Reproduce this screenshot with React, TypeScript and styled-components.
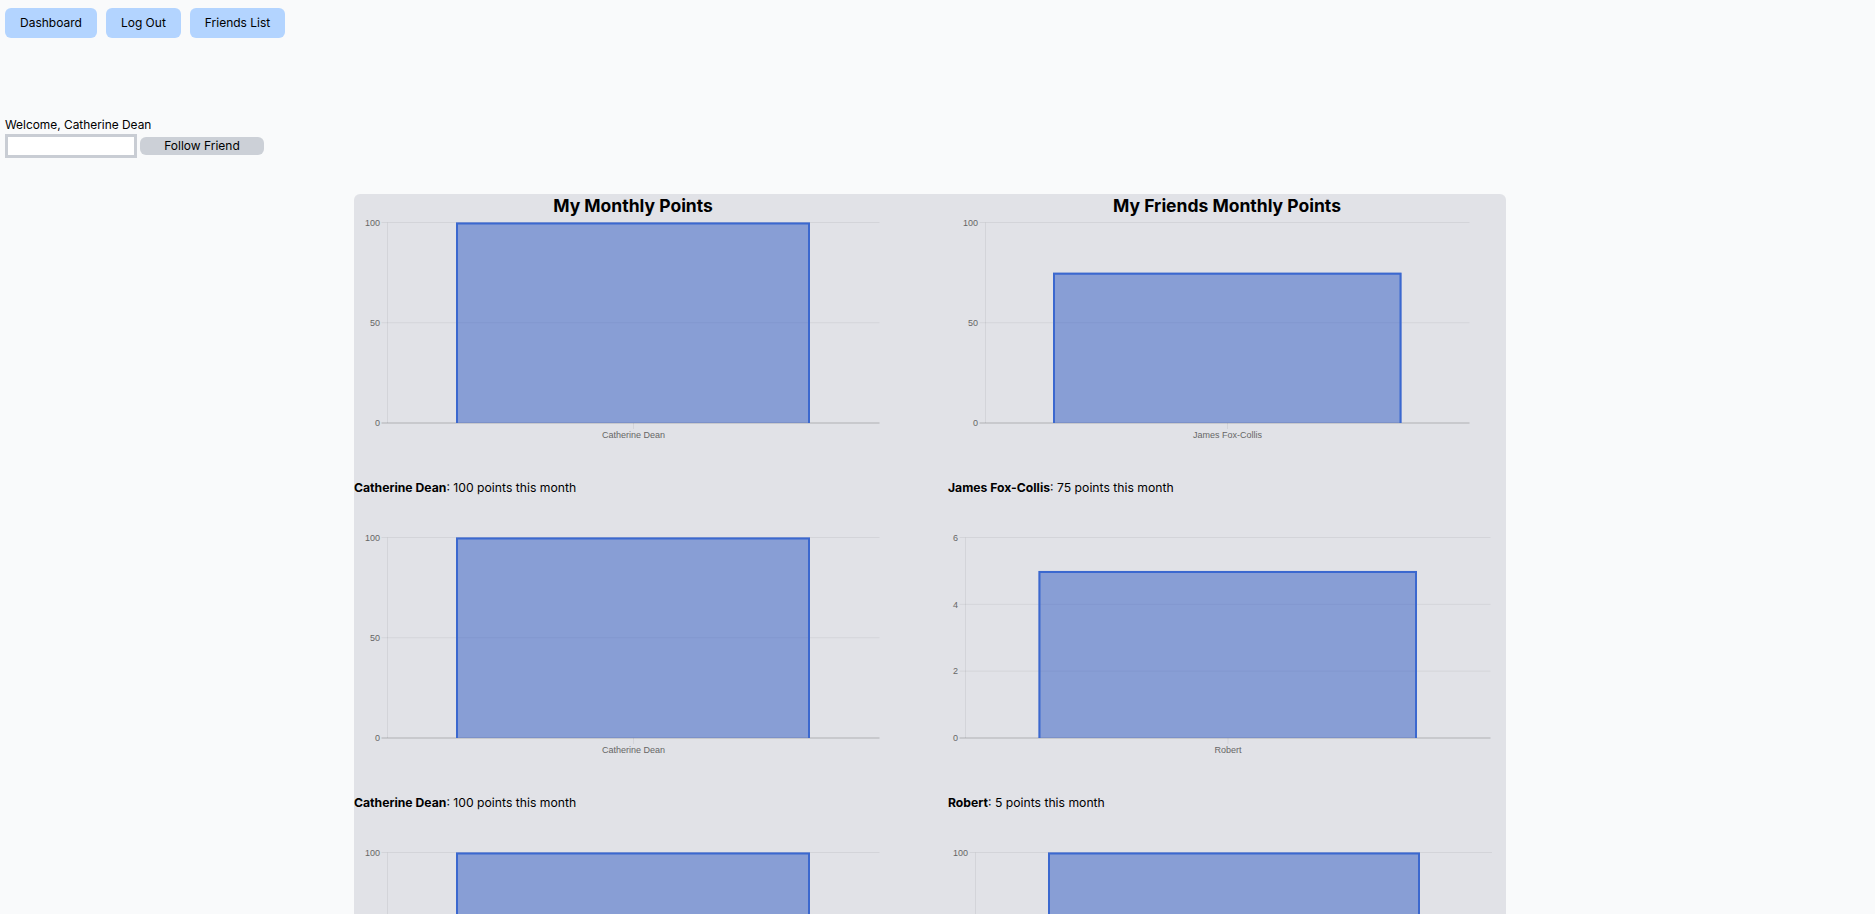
import styled, { createGlobalStyle } from "styled-components";

const GlobalStyle = createGlobalStyle`
  html, body {
    margin: 0;
    padding: 0;
    height: 100%;
    overflow: hidden;
    background: #f9fafb;
  }
  body {
    font-family: Inter, "Liberation Sans", sans-serif;
    color: #000;
  }
`;

const Page = styled.div`
  height: 914px;
  overflow: hidden;
  padding: 8px 15px 0 0;
  box-sizing: border-box;
  font-size: 12px;
  line-height: 18px;
`;

const Header = styled.header`
  padding-left: 5px;
`;

const Nav = styled.nav`
  display: flex;
  gap: 9px;
  height: 30px;
`;

const NavButton = styled.button`
  height: 30px;
  padding: 0 15px;
  border: none;
  border-radius: 6px;
  background: #b3d4ff;
  color: #000;
  font: inherit;
  cursor: pointer;
`;

const Welcome = styled.div`
  margin-top: 78px;
  font-size: 11.9px;
`;

const FollowForm = styled.form`
  display: flex;
  align-items: center;
  gap: 3px;
  height: 24px;
`;

const FollowInput = styled.input`
  width: 132px;
  height: 24px;
  padding: 0;
  box-sizing: border-box;
  border: 3px solid #c9cdd4;
  background: #fff;
`;

const FollowButton = styled.button`
  width: 124px;
  height: 18px;
  padding: 0;
  border: none;
  border-radius: 6px;
  background: #ccd0d7;
  color: #000;
  font: inherit;
  cursor: pointer;
`;

const Panel = styled.main`
  width: 1152px;
  margin: 36px auto 0;
  display: grid;
  grid-template-columns: 558px 558px;
  column-gap: 36px;
  background: #e1e2e7;
  border-radius: 6px;
`;

const Column = styled.section`
  min-width: 0;
`;

const Heading = styled.h2`
  margin: 0;
  height: 22px;
  font-size: 17.5px;
  line-height: 24px;
  font-weight: 700;
  text-align: center;
`;

const ChartBlock = styled.div`
  margin-bottom: 33px;
`;

const ChartSvg = styled.svg`
  display: block;
  width: 558px;
  height: 262px;
`;

const TickLabel = styled.text`
  font-family: "Liberation Sans", Arial, sans-serif;
  font-size: 9px;
  fill: #666;
`;

const Caption = styled.p`
  margin: 0;
  height: 20px;
  font-size: 12.2px;
  line-height: 20px;
`;

type ChartData = {
  name?: string;
  points?: number;
  axis: number;
  end: number;
  barLeft: number;
  barRight: number;
  value: number;
  ticks: number[];
};

const TOP = 6.5;
const BASE = 207;

const BarChart = ({ chart }: { chart: ChartData }) => {
  const { name, axis, end, barLeft, barRight, value, ticks } = chart;
  const max = ticks[0];
  const y = (v: number) => BASE - ((BASE - TOP) * v) / max;
  const barTop = y(value);
  const mid = (axis + end) / 2;

  return (
    <ChartSvg viewBox="0 0 558 262">
      <line x1={axis} y1={TOP} x2={axis} y2={BASE} stroke="rgba(0,0,0,0.06)" />
      {ticks.map((t) =>
        t === 0 ? null : (
          <line key={t} x1={axis - 6} y1={y(t)} x2={end} y2={y(t)} stroke="rgba(0,0,0,0.06)" />
        )
      )}
      <line x1={mid} y1={BASE} x2={mid} y2={BASE + 6} stroke="rgba(0,0,0,0.06)" />
      <line x1={axis - 6} y1={BASE} x2={end} y2={BASE} stroke="rgba(0,0,0,0.22)" />
      <rect
        x={barLeft}
        y={barTop}
        width={barRight - barLeft}
        height={BASE - barTop}
        fill="rgba(51,92,196,0.51)"
      />
      <path
        d={`M${barLeft + 1} ${BASE}V${barTop + 1}H${barRight - 1}V${BASE}`}
        fill="none"
        stroke="#3b68cf"
        strokeWidth={2}
      />
      {ticks.map((t) => (
        <TickLabel key={t} x={axis - 7.5} y={y(t) + 3.3} textAnchor="end">
          {t}
        </TickLabel>
      ))}
      {name && (
        <TickLabel x={mid} y={221.5} textAnchor="middle">
          {name}
        </TickLabel>
      )}
    </ChartSvg>
  );
};

const ChartEntry = ({ chart }: { chart: ChartData }) => (
  <ChartBlock>
    <BarChart chart={chart} />
    {chart.name && (
      <Caption>
        <b>{chart.name}</b>: {chart.points} points this month
      </Caption>
    )}
  </ChartBlock>
);

const hundred = [100, 50, 0];

// the third row runs off the bottom of the window, so only its top tick shows
const myCharts: ChartData[] = [
  { name: "Catherine Dean", points: 100, axis: 33.5, end: 525.5, barLeft: 102, barRight: 456, value: 100, ticks: hundred },
  { name: "Catherine Dean", points: 100, axis: 33.5, end: 525.5, barLeft: 102, barRight: 456, value: 100, ticks: hundred },
  { axis: 33.5, end: 525.5, barLeft: 102, barRight: 456, value: 100, ticks: [100] },
];

const friendCharts: ChartData[] = [
  { name: "James Fox-Collis", points: 75, axis: 37.5, end: 521.5, barLeft: 105, barRight: 453.5, value: 75, ticks: hundred },
  { name: "Robert", points: 5, axis: 17.5, end: 542.5, barLeft: 90.5, barRight: 469, value: 5, ticks: [6, 4, 2, 0] },
  { axis: 27.5, end: 544, barLeft: 100, barRight: 472, value: 100, ticks: [100] },
];

const App = () => {
  return (
    <Page>
      <GlobalStyle />
      <Header>
        <Nav>
          <NavButton>Dashboard</NavButton>
          <NavButton>Log Out</NavButton>
          <NavButton>Friends List</NavButton>
        </Nav>
        <Welcome>Welcome, Catherine Dean</Welcome>
        <FollowForm>
          <FollowInput />
          <FollowButton type="button">Follow Friend</FollowButton>
        </FollowForm>
      </Header>
      <Panel>
        <Column>
          <Heading>My Monthly Points</Heading>
          {myCharts.map((chart, i) => (
            <ChartEntry key={i} chart={chart} />
          ))}
        </Column>
        <Column>
          <Heading>My Friends Monthly Points</Heading>
          {friendCharts.map((chart, i) => (
            <ChartEntry key={i} chart={chart} />
          ))}
        </Column>
      </Panel>
    </Page>
  );
};

export default App;
